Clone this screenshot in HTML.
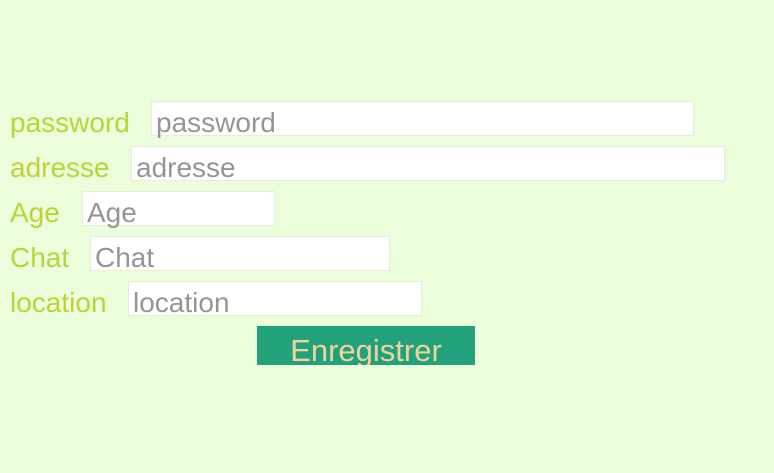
<!DOCTYPE html>
<html><head><meta charset="utf-8"><style>
html,body{margin:0;padding:0;}
body{width:774px;height:473px;background:#ebfdda;font-family:"Liberation Sans",sans-serif;position:relative;overflow:hidden;}
.l{position:absolute;left:10px;font-size:28px;color:#bcd336;line-height:30px;}
.i{position:absolute;box-sizing:border-box;height:35px;background:#fff;border:1px solid #e3eed8;font-size:28px;color:#959595;padding-left:4px;line-height:41px;}
.b{position:absolute;left:257px;top:326px;width:218px;height:39px;background:#22a27a;color:#f0d29e;font-size:31px;text-align:center;line-height:50px;overflow:hidden;}
</style></head><body>
<div class="l" style="top:108px">password</div><div class="i" style="left:151px;top:101px;width:543px">password</div>
<div class="l" style="top:153px">adresse</div><div class="i" style="left:131px;top:146px;width:594px">adresse</div>
<div class="l" style="top:198px">Age</div><div class="i" style="left:82px;top:191px;width:193px">Age</div>
<div class="l" style="top:243px">Chat</div><div class="i" style="left:90px;top:236px;width:300px">Chat</div>
<div class="l" style="top:288px">location</div><div class="i" style="left:128px;top:281px;width:294px">location</div>
<div class="b">Enregistrer</div>
</body></html>
